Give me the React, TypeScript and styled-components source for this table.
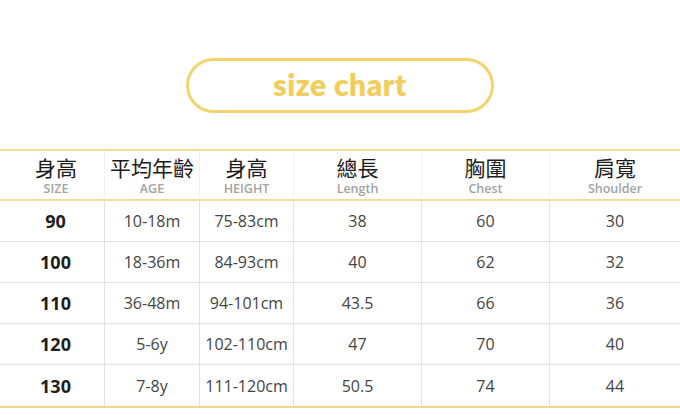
import styled, { createGlobalStyle } from "styled-components";

const GlobalStyle = createGlobalStyle`
  html, body {
    margin: 0;
    padding: 0;
    background: #fff;
  }
  body {
    font-family: "Open Sans", "Noto Sans CJK TC", sans-serif;
  }
`;

const Page = styled.div`
  width: 680px;
  height: 415px;
  display: flex;
  flex-direction: column;
  align-items: center;
  padding-top: 58px;
  box-sizing: border-box;
`;

const Pill = styled.div`
  width: 308px;
  height: 55px;
  flex-shrink: 0;
  box-sizing: border-box;
  border: 3px solid #f1d46e;
  border-radius: 28px;
  display: flex;
  align-items: center;
  justify-content: center;
  padding-bottom: 3px;
  font-family: "Lato", sans-serif;
  font-weight: 800;
  font-size: 30px;
  letter-spacing: 0.5px;
  color: #f2cd5c;
`;

const Table = styled.div`
  margin-top: 36px;
  width: 680px;
  display: grid;
  grid-template-columns: 105px 95px 94px 128px 128px 130px;
  border-top: 2px solid #f3dc94;
  border-bottom: 2px solid #f3d68c;
`;

const HeadCell = styled.div<{ $first?: boolean; $last?: boolean }>`
  height: 50px;
  display: flex;
  flex-direction: column;
  align-items: center;
  justify-content: flex-start;
  padding-top: 5px;
  padding-left: ${(p) => (p.$first ? "8px" : "0")};
  box-sizing: border-box;
  border-bottom: 2px solid #f3dc94;
  border-right: ${(p) => (p.$last ? "none" : "1px solid #f0f0f0")};
`;

const Zh = styled.div`
  font-family: "Noto Sans CJK TC", sans-serif;
  font-size: 21px;
  line-height: 22px;
  color: #1c1c1c;
`;

const En = styled.div`
  margin-top: 4px;
  font-family: "Open Sans", sans-serif;
  font-weight: 600;
  font-size: 12.5px;
  line-height: 14px;
  color: #a2a2a2;
`;

const Cell = styled.div<{ $bold?: boolean; $last?: boolean; $lastRow?: boolean }>`
  height: 41px;
  box-sizing: border-box;
  display: flex;
  align-items: center;
  justify-content: center;
  padding-left: ${(p) => (p.$bold ? "7px" : "0")};
  font-family: "Open Sans", sans-serif;
  font-size: ${(p) => (p.$bold ? "18px" : "16px")};
  font-weight: ${(p) => (p.$bold ? 700 : 400)};
  color: ${(p) => (p.$bold ? "#1e1e1e" : "#444")};
  border-right: ${(p) => (p.$last ? "none" : "1px solid #e2e2e2")};
  border-bottom: ${(p) => (p.$lastRow ? "none" : "1px solid #e2e2e2")};
`;

const headers = [
  ["身高", "SIZE"],
  ["平均年齡", "AGE"],
  ["身高", "HEIGHT"],
  ["總長", "Length"],
  ["胸圍", "Chest"],
  ["肩寬", "Shoulder"],
];

const rows = [
  ["90", "10-18m", "75-83cm", "38", "60", "30"],
  ["100", "18-36m", "84-93cm", "40", "62", "32"],
  ["110", "36-48m", "94-101cm", "43.5", "66", "36"],
  ["120", "5-6y", "102-110cm", "47", "70", "40"],
  ["130", "7-8y", "111-120cm", "50.5", "74", "44"],
];

export default function App() {
  return (
    <>
      <GlobalStyle />
      <Page>
        <Pill>size chart</Pill>
        <Table>
          {headers.map(([zh, en], i) => (
            <HeadCell key={en} $first={i === 0} $last={i === headers.length - 1}>
              <Zh>{zh}</Zh>
              <En>{en}</En>
            </HeadCell>
          ))}
          {rows.map((row, r) =>
            row.map((v, c) => (
              <Cell
                key={`${r}-${c}`}
                $bold={c === 0}
                $last={c === row.length - 1}
                $lastRow={r === rows.length - 1}
              >
                {v}
              </Cell>
            ))
          )}
        </Table>
      </Page>
    </>
  );
}
